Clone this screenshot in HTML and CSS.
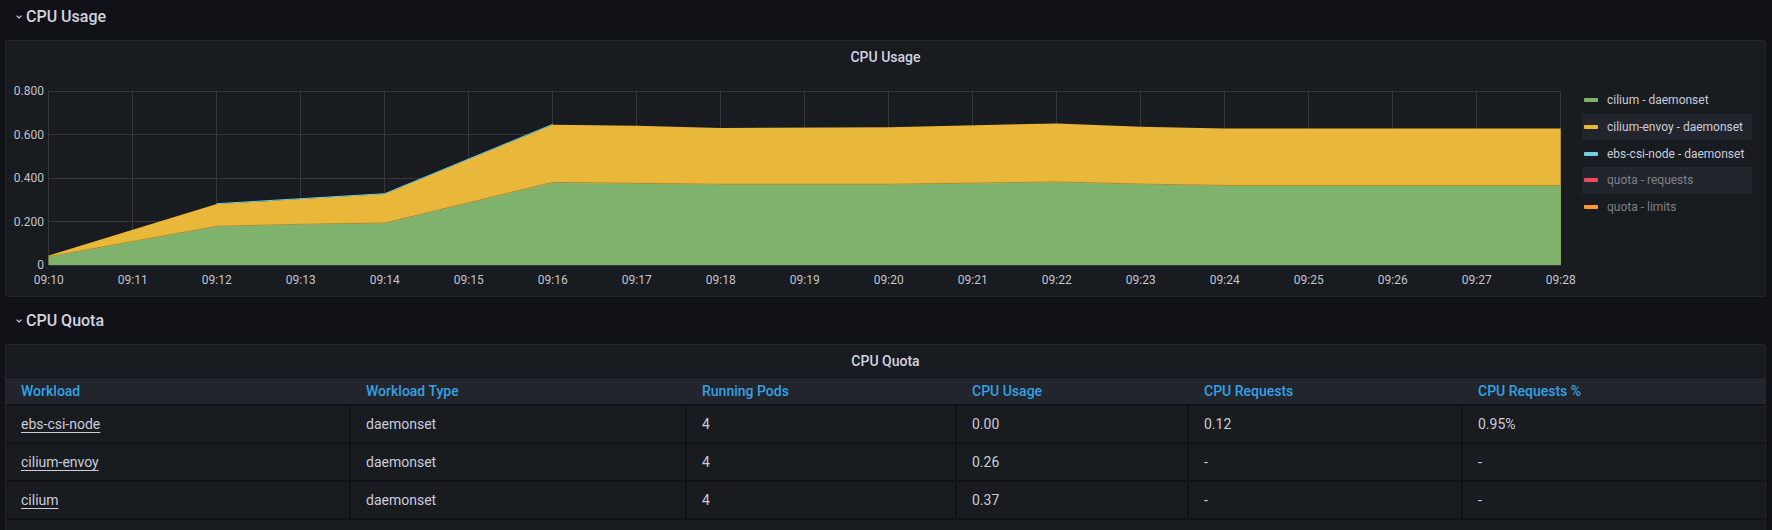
FILE: index.html
```html
<!DOCTYPE html>
<html lang="en">
<head>
<meta charset="utf-8">
<title>CPU</title>
<link rel="stylesheet" href="styles.css">
</head>
<body>
<div class="dash">
  <div class="row-head">
    <svg class="chev" width="6" height="4" viewBox="0 0 6 4"><path d="M0.6 0.6 L3 3 L5.4 0.6" fill="none" stroke="#ccccdc" stroke-width="1.2"/></svg>
    <span>CPU Usage</span>
  </div>
  <section class="panel panel-graph">
    <header class="panel-title">CPU Usage</header>
    <div class="graph-body">
      <svg class="chart" width="1576" height="223" viewBox="0 0 1576 223">
        <g class="grid" stroke="#35373c" stroke-width="1">
          <line x1="42.5" y1="18.5" x2="1554.5" y2="18.5"/>
          <line x1="42.5" y1="61.5" x2="1554.5" y2="61.5"/>
          <line x1="42.5" y1="105.5" x2="1554.5" y2="105.5"/>
          <line x1="42.5" y1="148.5" x2="1554.5" y2="148.5"/>
          <line x1="42.5" y1="18" x2="42.5" y2="192"/>
          <line x1="126.5" y1="18" x2="126.5" y2="192"/>
          <line x1="210.5" y1="18" x2="210.5" y2="192"/>
          <line x1="294.5" y1="18" x2="294.5" y2="192"/>
          <line x1="378.5" y1="18" x2="378.5" y2="192"/>
          <line x1="462.5" y1="18" x2="462.5" y2="192"/>
          <line x1="546.5" y1="18" x2="546.5" y2="192"/>
          <line x1="630.5" y1="18" x2="630.5" y2="192"/>
          <line x1="714.5" y1="18" x2="714.5" y2="192"/>
          <line x1="798.5" y1="18" x2="798.5" y2="192"/>
          <line x1="882.5" y1="18" x2="882.5" y2="192"/>
          <line x1="966.5" y1="18" x2="966.5" y2="192"/>
          <line x1="1050.5" y1="18" x2="1050.5" y2="192"/>
          <line x1="1134.5" y1="18" x2="1134.5" y2="192"/>
          <line x1="1218.5" y1="18" x2="1218.5" y2="192"/>
          <line x1="1302.5" y1="18" x2="1302.5" y2="192"/>
          <line x1="1386.5" y1="18" x2="1386.5" y2="192"/>
          <line x1="1470.5" y1="18" x2="1470.5" y2="192"/>
          <line x1="1554.5" y1="18" x2="1554.5" y2="192"/>
        </g>
        <polygon fill="#e9b739" points="42.7,182.6 210.7,131.1 294.7,126.1 378.7,121.1 546.7,51.7 630.7,52.8 714.7,55 882.7,54.3 1050.7,50.4 1134.7,53.7 1218.7,55.6 1554.7,55.6 1554.7,192 42.7,192"/>
        <polyline fill="none" stroke="#a88a3a" stroke-width="1" points="42.7,183.7 210.7,153.3 294.7,151.3 378.7,150 546.7,109.4 714.7,111.3 882.7,111.3 1050.7,108.9 1134.7,111.1 1218.7,112.4 1554.7,112.4"/>
        <polygon fill="#7eb26d" points="42.7,184.2 210.7,153.8 294.7,151.8 378.7,150.5 546.7,109.9 714.7,111.8 882.7,111.8 1050.7,109.4 1134.7,111.6 1218.7,112.9 1554.7,112.9 1554.7,192 42.7,192"/>
        <polyline fill="none" stroke="#6ed0e0" stroke-width="1" points="210.7,130.7 294.7,125.7 378.7,120.7 546.7,51.3"/>
        <line x1="42.5" y1="192.5" x2="1554.5" y2="192.5" stroke="#35373c"/>
        <g class="ylab" text-anchor="end">
          <text x="38" y="22.3">0.800</text>
          <text x="38" y="65.8">0.600</text>
          <text x="38" y="109.3">0.400</text>
          <text x="38" y="152.8">0.200</text>
          <text x="38" y="196.3">0</text>
        </g>
        <g class="xlab" text-anchor="middle">
          <text x="42.7" y="211.3">09:10</text>
          <text x="126.7" y="211.3">09:11</text>
          <text x="210.7" y="211.3">09:12</text>
          <text x="294.7" y="211.3">09:13</text>
          <text x="378.7" y="211.3">09:14</text>
          <text x="462.7" y="211.3">09:15</text>
          <text x="546.7" y="211.3">09:16</text>
          <text x="630.7" y="211.3">09:17</text>
          <text x="714.7" y="211.3">09:18</text>
          <text x="798.7" y="211.3">09:19</text>
          <text x="882.7" y="211.3">09:20</text>
          <text x="966.7" y="211.3">09:21</text>
          <text x="1050.7" y="211.3">09:22</text>
          <text x="1134.7" y="211.3">09:23</text>
          <text x="1218.7" y="211.3">09:24</text>
          <text x="1302.7" y="211.3">09:25</text>
          <text x="1386.7" y="211.3">09:26</text>
          <text x="1470.7" y="211.3">09:27</text>
          <text x="1554.7" y="211.3">09:28</text>
        </g>
      </svg>
      <ul class="legend">
        <li><span class="swatch sw-green"></span><span>cilium - daemonset</span></li>
        <li><span class="swatch sw-yellow"></span><span>cilium-envoy - daemonset</span></li>
        <li><span class="swatch sw-cyan"></span><span>ebs-csi-node - daemonset</span></li>
        <li class="off"><span class="swatch sw-red"></span><span>quota - requests</span></li>
        <li class="off"><span class="swatch sw-orange"></span><span>quota - limits</span></li>
      </ul>
    </div>
  </section>

  <div class="row-head">
    <svg class="chev" width="6" height="4" viewBox="0 0 6 4"><path d="M0.6 0.6 L3 3 L5.4 0.6" fill="none" stroke="#ccccdc" stroke-width="1.2"/></svg>
    <span>CPU Quota</span>
  </div>
  <section class="panel panel-table">
    <header class="panel-title">CPU Quota</header>
    <div class="tbl">
      <div class="tr thead">
        <div class="cell">Workload</div>
        <div class="cell">Workload Type</div>
        <div class="cell">Running Pods</div>
        <div class="cell">CPU Usage</div>
        <div class="cell">CPU Requests</div>
        <div class="cell">CPU Requests %</div>
      </div>
      <div class="tr trow">
        <div class="cell"><a class="link">ebs-csi-node</a></div>
        <div class="cell">daemonset</div>
        <div class="cell">4</div>
        <div class="cell">0.00</div>
        <div class="cell">0.12</div>
        <div class="cell">0.95%</div>
      </div>
      <div class="tr trow">
        <div class="cell"><a class="link">cilium-envoy</a></div>
        <div class="cell">daemonset</div>
        <div class="cell">4</div>
        <div class="cell">0.26</div>
        <div class="cell">-</div>
        <div class="cell">-</div>
      </div>
      <div class="tr trow">
        <div class="cell"><a class="link">cilium</a></div>
        <div class="cell">daemonset</div>
        <div class="cell">4</div>
        <div class="cell">0.37</div>
        <div class="cell">-</div>
        <div class="cell">-</div>
      </div>
    </div>
  </section>
</div>
</body>
</html>
```

FILE: styles.css
```css
html, body {
  height: 530px;
  overflow: hidden;
}
body {
  margin: 0;
  background: #111217;
  font-family: Roboto, "Liberation Sans", sans-serif;
  color: #ccccdc;
}
.dash {
  padding: 0 6px 0 5px;
}
.row-head {
  height: 32px;
  display: flex;
  align-items: center;
  gap: 4px;
  padding-left: 11px;
  font-size: 16px;
  font-weight: 500;
  color: #d2d3e0;
}
.chev {
  display: block;
  margin-top: 2px;
}
.panel {
  background: #181b1f;
  border: 1px solid #25272c;
  border-radius: 3px;
  margin-top: 8px;
}
.panel-graph {
  margin-bottom: 7px;
}
.panel-title {
  height: 32px;
  display: flex;
  align-items: center;
  justify-content: center;
  font-size: 14px;
  font-weight: 500;
  color: #d2d3e0;
}
.graph-body {
  display: flex;
  height: 223px;
}
.chart {
  display: block;
  flex: none;
  font-family: Roboto, "Liberation Sans", sans-serif;
  font-size: 12px;
}
.ylab text, .xlab text {
  fill: #c3c4cc;
}
.legend {
  list-style: none;
  margin: 0;
  padding: 14px 0 0 0;
  width: 170px;
}
.legend li {
  height: 26.7px;
  display: flex;
  align-items: center;
  gap: 9px;
  padding-left: 2px;
  font-size: 12px;
  color: #ccccdc;
}
.legend li:nth-child(even) {
  background: #22252b;
}
.legend li.off {
  color: #7f8088;
}
.swatch {
  width: 14px;
  height: 4px;
  border-radius: 1px;
  flex: none;
}
.sw-green { background: #7eb26d; }
.sw-yellow { background: #eab839; }
.sw-cyan { background: #6ed0e0; }
.sw-red { background: #f2495c; }
.sw-orange { background: #ff9830; }

.panel-table {
  height: 200px;
}
.tbl {
  border-top: 1px solid #111217;
}
.tr {
  display: grid;
  grid-template-columns: 343px 336px 270px 232px 274px 1fr;
}
.cell {
  display: flex;
  align-items: center;
  padding-left: 15px;
  font-size: 14px;
}
.cell + .cell {
  border-left: 2px solid transparent;
}
.thead {
  height: 26px;
  background: #22252b;
  color: #33a2e5;
  font-weight: 500;
}
.trow {
  height: 36px;
  border-top: 2px solid #111217;
  color: #ccccdc;
}
.trow:last-child {
  border-bottom: 2px solid #111217;
}
.trow .cell + .cell {
  border-left-color: #111217;
}
.link {
  color: #ccccdc;
  text-decoration: underline;
  text-underline-offset: 3px;
  text-decoration-thickness: 1px;
}
```
